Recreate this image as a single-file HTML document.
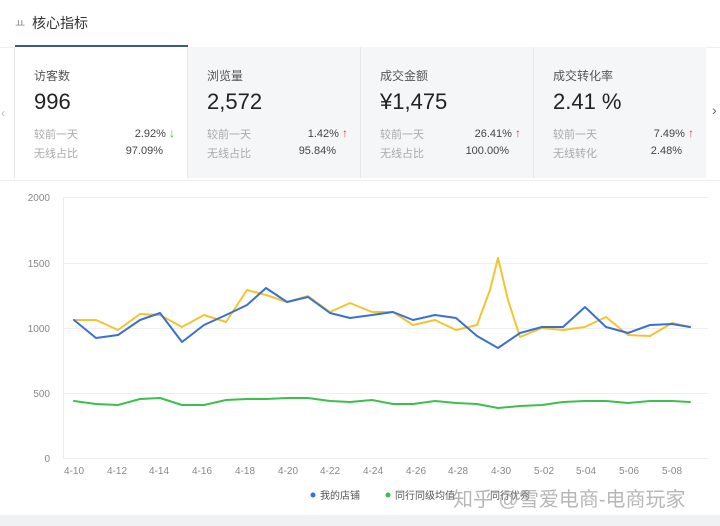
<!DOCTYPE html><html><head><meta charset="utf-8"><style>
*{margin:0;padding:0;box-sizing:border-box}
body{width:720px;height:526px;background:#fff;font-family:"Liberation Sans","Noto Sans CJK SC",sans-serif;position:relative;overflow:hidden;color:#333}
.t{position:absolute;white-space:nowrap}
.card{position:absolute;top:47px;height:131px;width:173px;background:#f5f6f8;border-left:1px solid #e8e8e8}
.card .n{position:absolute;left:19px;top:20px;font-size:12px;color:#555}
.card .v{position:absolute;left:19px;top:42px;font-size:22px;color:#222}
.card .r{position:absolute;left:19px;font-size:11px;color:#aaa}
.card .p{position:absolute;font-size:11px;color:#444;text-align:right}
.ar{font-size:12px;font-weight:bold}
</style></head><body>
<div class="t" style="left:15px;top:15px;font-size:11px;color:#888">ㅛ</div>
<div class="t" style="left:32px;top:13px;font-size:14px;color:#333">核心指标</div>
<div style="position:absolute;left:0;top:47px;width:720px;height:1px;background:#eee"></div>
<div class="t" style="left:1px;top:106px;font-size:12px;color:#bbb">‹</div>
<div class="t" style="left:712px;top:102px;font-size:14px;color:#666">›</div>
<div class="card" style="left:14px;background:#fff">
<div style="position:absolute;left:0;top:-2px;width:173px;height:2px;background:#3a5a8c"></div>
<div class="n">访客数</div><div class="v">996</div>
<div class="r" style="top:79px">较前一天</div><div class="r" style="top:98px">无线占比</div>
<div class="p" style="right:12px;top:79px">2.92% <span class="ar" style="color:#3fb04a">↓</span></div>
<div class="p" style="right:24px;top:98px">97.09%</div></div>
<div class="card" style="left:187px">
<div class="n">浏览量</div><div class="v">2,572</div>
<div class="r" style="top:79px">较前一天</div><div class="r" style="top:98px">无线占比</div>
<div class="p" style="right:12px;top:79px">1.42% <span class="ar" style="color:#e04040">↑</span></div>
<div class="p" style="right:24px;top:98px">95.84%</div></div>
<div class="card" style="left:360px">
<div class="n">成交金额</div><div class="v">¥1,475</div>
<div class="r" style="top:79px">较前一天</div><div class="r" style="top:98px">无线占比</div>
<div class="p" style="right:12px;top:79px">26.41% <span class="ar" style="color:#e04040">↑</span></div>
<div class="p" style="right:24px;top:98px">100.00%</div></div>
<div class="card" style="left:533px">
<div class="n">成交转化率</div><div class="v">2.41 %</div>
<div class="r" style="top:79px">较前一天</div><div class="r" style="top:98px">无线转化</div>
<div class="p" style="right:12px;top:79px">7.49% <span class="ar" style="color:#e04040">↑</span></div>
<div class="p" style="right:24px;top:98px">2.48%</div></div>
<div style="position:absolute;left:0;top:515px;width:720px;height:11px;background:#f0f1f3"></div>
<svg style="position:absolute;left:0;top:0" width="720" height="526">
<g stroke="#eee" stroke-width="1">
<line x1="63" y1="197.5" x2="708" y2="197.5"/><line x1="63" y1="263.5" x2="708" y2="263.5"/><line x1="63" y1="328.5" x2="708" y2="328.5"/><line x1="63" y1="393.5" x2="708" y2="393.5"/><line x1="63" y1="458.5" x2="708" y2="458.5"/><line x1="63.5" y1="197" x2="63.5" y2="458"/></g>
<g font-size="10" fill="#888" font-family="Liberation Sans" text-anchor="end">
<text x="50" y="201">2000</text><text x="50" y="267">1500</text><text x="50" y="332">1000</text><text x="50" y="397">500</text><text x="50" y="462">0</text></g>
<g font-size="10" fill="#888" font-family="Liberation Sans" text-anchor="middle">
<text x="74" y="474">4-10</text><text x="117" y="474">4-12</text><text x="159" y="474">4-14</text><text x="202" y="474">4-16</text><text x="245" y="474">4-18</text><text x="288" y="474">4-20</text><text x="330" y="474">4-22</text><text x="373" y="474">4-24</text><text x="416" y="474">4-26</text><text x="458" y="474">4-28</text><text x="501" y="474">4-30</text><text x="544" y="474">5-02</text><text x="586" y="474">5-04</text><text x="629" y="474">5-06</text><text x="672" y="474">5-08</text></g>
<g fill="none" stroke-width="2" stroke-linejoin="round" stroke-linecap="round">
<polyline stroke="#f4c430" points="74,320 96,320 118,330 140,314 160,315 182,327 204,315 226,322 247,290 266,295 287,302 308,296 330,312 350,303 372,312 393,312 413,325 435,320 456,330 477,325 490,290 498,258 508,300 520,337 542,328 563,330 585,327 606,317 628,335 650,336 672,323 690,327"/>
<polyline stroke="#3a6fd8" points="74,320 96,338 118,335 140,320 160,313 182,342 204,325 226,315 247,305 266,288 287,302 308,297 330,313 350,318 372,315 393,312 413,320 435,315 456,318 477,336 498,348 520,333 542,327 563,327 585,307 606,327 628,333 650,325 672,324 690,327"/>
<polyline stroke="#3cc04a" points="74,401 96,404 118,405 140,399 160,398 182,405 204,405 226,400 247,399 266,399 287,398 308,398 330,401 350,402 372,400 393,404 413,404 435,401 456,403 477,404 498,408 520,406 542,405 563,402 585,401 606,401 628,403 650,401 672,401 690,402"/></g>
<line x1="0" y1="180.5" x2="720" y2="180.5" stroke="#eee"/>
<circle cx="313" cy="495" r="2.5" fill="#3a6fd8"/><text x="320" y="499" font-size="10" fill="#555" font-family="Liberation Sans,Noto Sans CJK SC">我的店铺</text>
<circle cx="388" cy="495" r="2.5" fill="#3cc04a"/><text x="395" y="499" font-size="10" fill="#555" font-family="Liberation Sans,Noto Sans CJK SC">同行同级均值</text>
<text x="490" y="499" font-size="10" fill="#555" font-family="Liberation Sans,Noto Sans CJK SC">同行优秀</text>
<text x="453" y="506" font-size="20" fill="#999" fill-opacity="0.7" font-family="Liberation Sans,Noto Sans CJK SC">知乎 @雪爱电商-电商玩家</text>
</svg>
</body></html>
